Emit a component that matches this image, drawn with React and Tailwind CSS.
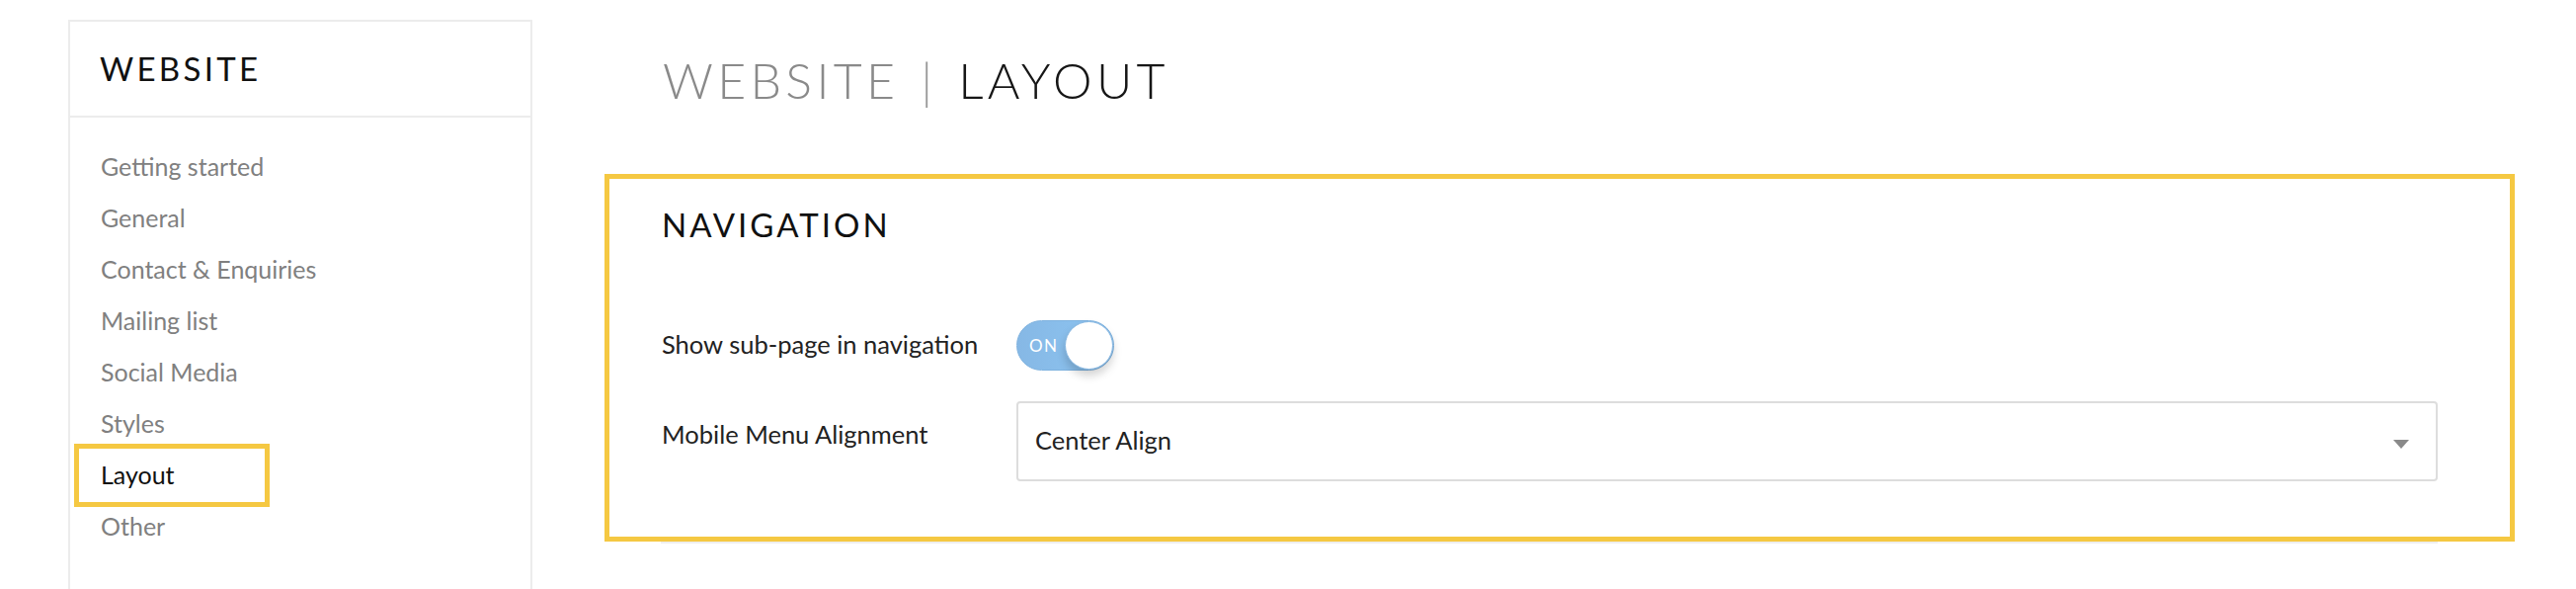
export default function App() {
  const items = [
    "Getting started",
    "General",
    "Contact & Enquiries",
    "Mailing list",
    "Social Media",
    "Styles",
    "Layout",
    "Other",
  ];
  return (
    <div className="flex h-[596px] w-[2608px] overflow-hidden bg-white font-[family-name:Lato,sans-serif]">
      {/* Sidebar */}
      <aside className="ml-[69px] mt-[20px] h-[600px] w-[470px] shrink-0 border-2 border-b-0 border-[#ececec]">
        <div className="flex h-[97px] items-center border-b-2 border-[#ececec] pl-[30px]">
          <h2 className="text-[33px] leading-[33px] tracking-[3.3px] text-[#111]">WEBSITE</h2>
        </div>
        <ul className="pt-[24px]">
          {items.map((label) => {
            const active = label === "Layout";
            return (
              <li key={label} className="relative flex h-[52px] items-center pl-[31px]">
                {active && (
                  <span className="absolute left-[4px] top-[-6px] h-[64px] w-[198px] border-[5px] border-[#f5c842]" />
                )}
                <span
                  className={
                    active
                      ? "relative -mt-[2px] text-[25px] leading-[25px] text-[#111]"
                      : "relative -mt-[2px] text-[25px] leading-[25px] text-[#808080]"
                  }
                >
                  {label}
                </span>
              </li>
            );
          })}
        </ul>
      </aside>

      {/* Main */}
      <main className="ml-[73px] flex w-[1934px] shrink-0 flex-col">
        <h1 className="mt-[56px] flex items-baseline pl-[59px] text-[50px] font-light leading-[50px] tracking-[4.3px]">
          <span className="text-[#8a8a8a]">WEBSITE</span>
          <span className="ml-[22px] text-[#9a9a9a] tracking-normal">|</span>
          <span className="ml-[26px] text-[#161616]">LAYOUT</span>
        </h1>

        <section className="mt-[70px] border-[5px] border-[#f5c842] pb-[56px] pl-[53px] pt-[30px]">
          <h3 className="text-[33px] leading-[33px] tracking-[3px] text-[#111]">NAVIGATION</h3>

          <div className="mt-[80px] flex h-[51px] items-center">
            <span className="-mt-[2px] w-[359px] shrink-0 text-[25.5px] leading-[25px] text-[#222]">
              Show sub-page in navigation
            </span>
            <div className="flex h-[51px] w-[99px] items-center justify-between rounded-full border border-[#7eb2df] bg-gradient-to-r from-[#86b8e5] to-[#8dc5f2] pl-[12px]">
              <span className="text-[17px] leading-[17px] tracking-[1.5px] text-white">ON</span>
              <span className="h-[49px] w-[49px] rounded-full border border-[#86b7e2] bg-white shadow-[0_6px_10px_rgba(0,0,0,0.18)]" />
            </div>
          </div>

          <div className="mt-[31px] flex items-start">
            <span className="mt-[21px] w-[359px] shrink-0 text-[25.5px] leading-[25px] text-[#222]">
              Mobile Menu Alignment
            </span>
            <div className="flex h-[81px] w-[1439px] items-center justify-between rounded-[4px] border-2 border-[#dddddd] pl-[17px] pr-[27px]">
              <span className="-mt-[2px] text-[25.5px] leading-[25px] text-[#222]">Center Align</span>
              <svg className="mt-[6px]" width="16" height="9" viewBox="0 0 16 9">
                <polygon points="0,0 16,0 8,9" fill="#8a8a8a" />
              </svg>
            </div>
          </div>
        </section>
        <div className="ml-[57px] h-[2px] w-[1799px] bg-[#eeeeee]" />
      </main>
    </div>
  );
}
